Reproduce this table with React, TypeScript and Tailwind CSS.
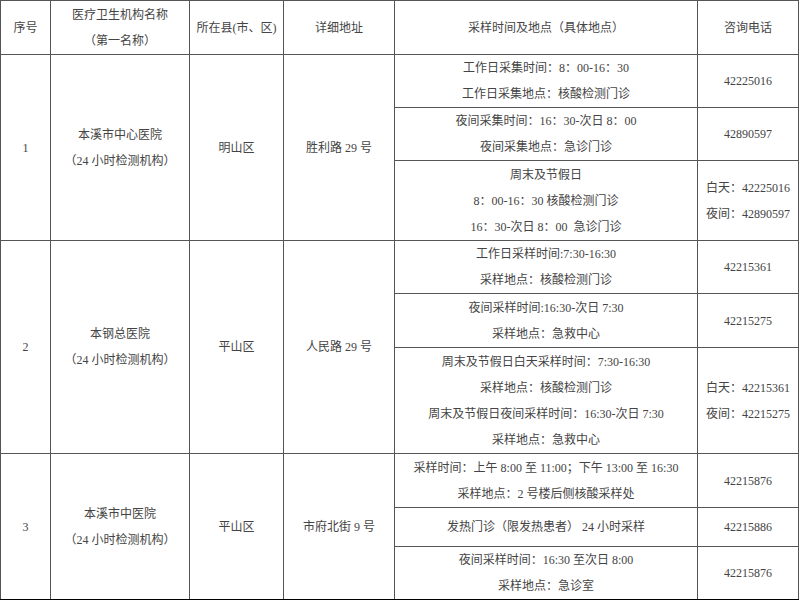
import React from "react";

type Slot = { h: number; lines: string[]; phone: string[] };

type Site = {
  no: string;
  name: string[];
  district: string;
  address: string;
  slots: Slot[];
};

const sites: Site[] = [
  {
    no: "1",
    name: ["本溪市中心医院", "（24 小时检测机构）"],
    district: "明山区",
    address: "胜利路 29 号",
    slots: [
      { h: 53, lines: ["工作日采集时间：8：00-16：30", "工作日采集地点：核酸检测门诊"], phone: ["42225016"] },
      { h: 53, lines: ["夜间采集时间：16：30-次日 8：00", "夜间采集地点：急诊门诊"], phone: ["42890597"] },
      {
        h: 80,
        lines: ["周末及节假日", "8：00-16：30 核酸检测门诊", "16：30-次日 8：00  急诊门诊"],
        phone: ["白天：42225016", "夜间：42890597"],
      },
    ],
  },
  {
    no: "2",
    name: ["本钢总医院", "（24 小时检测机构）"],
    district: "平山区",
    address: "人民路 29 号",
    slots: [
      { h: 53, lines: ["工作日采样时间:7:30-16:30", "采样地点：核酸检测门诊"], phone: ["42215361"] },
      { h: 54, lines: ["夜间采样时间:16:30-次日 7:30", "采样地点：急救中心"], phone: ["42215275"] },
      {
        h: 106,
        lines: [
          "周末及节假日白天采样时间：7:30-16:30",
          "采样地点：核酸检测门诊",
          "周末及节假日夜间采样时间：16:30-次日 7:30",
          "采样地点：急救中心",
        ],
        phone: ["白天：42215361", "夜间：42215275"],
      },
    ],
  },
  {
    no: "3",
    name: ["本溪市中医院", "（24 小时检测机构）"],
    district: "平山区",
    address: "市府北街 9 号",
    slots: [
      {
        h: 54,
        lines: ["采样时间：上午 8:00 至 11:00；下午 13:00 至 16:30", "采样地点：2 号楼后侧核酸采样处"],
        phone: ["42215876"],
      },
      { h: 39, lines: ["发热门诊（限发热患者） 24 小时采样"], phone: ["42215886"] },
      { h: 52, lines: ["夜间采样时间：16:30 至次日 8:00", "采样地点：急诊室"], phone: ["42215876"] },
    ],
  },
];

const cell = "border border-[#555] text-center align-middle p-0 leading-[26px]";

function Lines({ items }: { items: string[] }) {
  return (
    <>
      {items.map((t, i) => (
        <div key={i} className="whitespace-pre">
          {t}
        </div>
      ))}
    </>
  );
}

export default function App() {
  return (
    <div
      className="w-[800px] h-[600px] bg-white text-[#444] text-[12px] overflow-hidden"
      style={{ fontFamily: "'Liberation Serif', 'Noto Sans CJK SC', serif" }}
    >
      <table className="border-collapse table-fixed w-[798px] border-b-2 border-b-black">
        <colgroup>
          <col className="w-[50px]" />
          <col className="w-[139px]" />
          <col className="w-[94px]" />
          <col className="w-[111px]" />
          <col className="w-[303px]" />
          <col className="w-[101px]" />
        </colgroup>
        <thead>
          <tr>
            <th className={`${cell} h-[54px] font-normal`}>序号</th>
            <th className={`${cell} font-normal`}>
              <Lines items={["医疗卫生机构名称", "（第一名称）"]} />
            </th>
            <th className={`${cell} font-normal`}>所在县(市、区)</th>
            <th className={`${cell} font-normal`}>详细地址</th>
            <th className={`${cell} font-normal`}>采样时间及地点（具体地点）</th>
            <th className={`${cell} font-normal`}>咨询电话</th>
          </tr>
        </thead>
        <tbody>
          {sites.map((s, si) =>
            s.slots.map((slot, i) => (
              <tr key={`${si}-${i}`}>
                {i === 0 && (
                  <>
                    <td rowSpan={s.slots.length} className={cell}>
                      {s.no}
                    </td>
                    <td rowSpan={s.slots.length} className={cell}>
                      <Lines items={s.name} />
                    </td>
                    <td rowSpan={s.slots.length} className={cell}>
                      {s.district}
                    </td>
                    <td rowSpan={s.slots.length} className={cell}>
                      {s.address}
                    </td>
                  </>
                )}
                <td className={cell} style={{ height: slot.h }}>
                  <Lines items={slot.lines} />
                </td>
                <td className={cell}>
                  <Lines items={slot.phone} />
                </td>
              </tr>
            ))
          )}
        </tbody>
      </table>
    </div>
  );
}
